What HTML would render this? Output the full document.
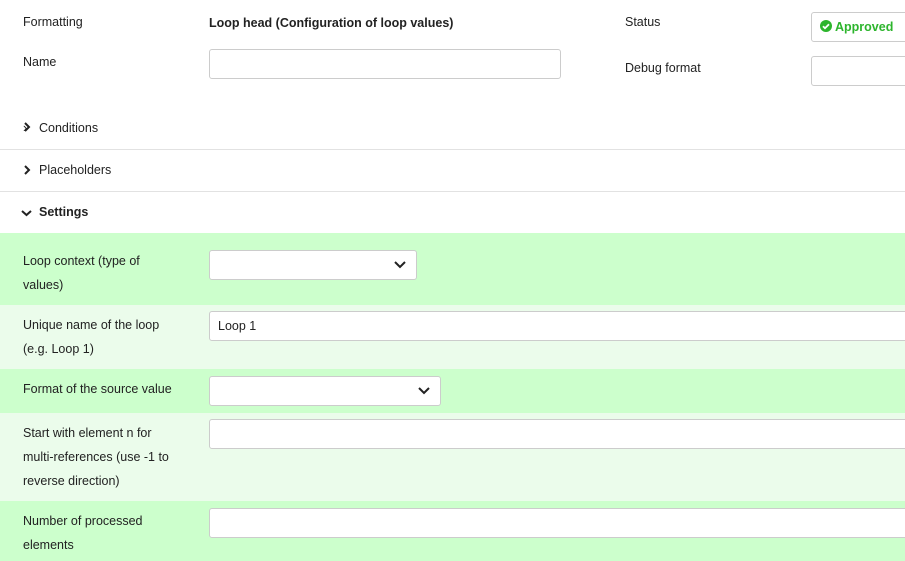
<!DOCTYPE html>
<html><head><style>
*{box-sizing:border-box;margin:0;padding:0}
body{width:905px;height:561px;overflow:hidden;background:#fff;font-family:"Liberation Sans",sans-serif;font-size:12.5px;color:#222;position:relative}
.a{position:absolute}
.inp{position:absolute;background:#fff;border:1px solid #ccc;border-radius:3px;height:30px}
.sec{position:absolute;left:0;width:905px;border-bottom:1px solid #e2e2e2}
.row{position:absolute;left:0;width:905px}
.d{background:#ccffcc}.l{background:#ebfceb}
.lab{position:absolute;left:23px;line-height:24px}
.chev{position:absolute;right:10px;top:9px}
</style></head><body>
<div class="a" style="left:23px;top:15px">Formatting</div>
<div class="a" style="left:209px;top:16px;font-weight:bold">Loop head (Configuration of loop values)</div>
<div class="a" style="left:625px;top:15px">Status</div>
<div class="inp" style="left:811px;top:12px;width:110px;height:30px;color:#2db52d;font-weight:bold;padding:7px 0 0 8px"><svg width="12" height="12" viewBox="0 0 12 12" style="vertical-align:-1px"><circle cx="6" cy="6" r="6" fill="#2db52d"/><path d="M3 6.2l2 2 4-4" stroke="#fff" stroke-width="1.8" fill="none"/></svg> Approved</div>
<div class="a" style="left:23px;top:55px">Name</div>
<div class="inp" style="left:209px;top:49px;width:352px"></div>
<div class="a" style="left:625px;top:61px">Debug format</div>
<div class="inp" style="left:811px;top:56px;width:110px"></div>
<div class="sec" style="top:108px;height:42px"><div class="a" style="left:23px;top:13px">&#x203A;</div></div>
<div class="a" style="left:22px;top:121px"><svg width="10" height="10"><path d="M3 1l4 4-4 4" stroke="#222" stroke-width="2" fill="none"/></svg></div>
<div class="a" style="left:39px;top:121px">Conditions</div>
<div class="sec" style="top:150px;height:42px"></div>
<div class="a" style="left:22px;top:164px"><svg width="10" height="10"><path d="M3 1l4 4-4 4" stroke="#222" stroke-width="2" fill="none"/></svg></div>
<div class="a" style="left:39px;top:163px">Placeholders</div>
<div class="a" style="left:21px;top:207px"><svg width="11" height="10"><path d="M1 3l4.5 4 4.5-4" stroke="#222" stroke-width="2" fill="none"/></svg></div>
<div class="a" style="left:39px;top:205px;font-weight:bold">Settings</div>
<div class="row d" style="top:233px;height:72px"><div class="lab" style="top:16px">Loop context (type of<br>values)</div>
<div class="inp" style="left:209px;top:17px;width:208px;height:30px"><svg class="chev" width="12" height="10"><path d="M1 2l5 5 5-5" stroke="#222" stroke-width="2" fill="none"/></svg></div></div>
<div class="row l" style="top:305px;height:64px"><div class="lab" style="top:8px">Unique name of the loop<br>(e.g. Loop 1)</div>
<div class="inp" style="left:209px;top:6px;width:710px;padding:7px 0 0 8px">Loop 1</div></div>
<div class="row d" style="top:369px;height:44px"><div class="lab" style="top:8px">Format of the source value</div>
<div class="inp" style="left:209px;top:7px;width:232px"><svg class="chev" width="12" height="10"><path d="M1 2l5 5 5-5" stroke="#222" stroke-width="2" fill="none"/></svg></div></div>
<div class="row l" style="top:413px;height:88px"><div class="lab" style="top:8px">Start with element n for<br>multi-references (use -1 to<br>reverse direction)</div>
<div class="inp" style="left:209px;top:6px;width:710px"></div></div>
<div class="row d" style="top:501px;height:60px"><div class="lab" style="top:8px">Number of processed<br>elements</div>
<div class="inp" style="left:209px;top:7px;width:710px"></div></div>
</body></html>
